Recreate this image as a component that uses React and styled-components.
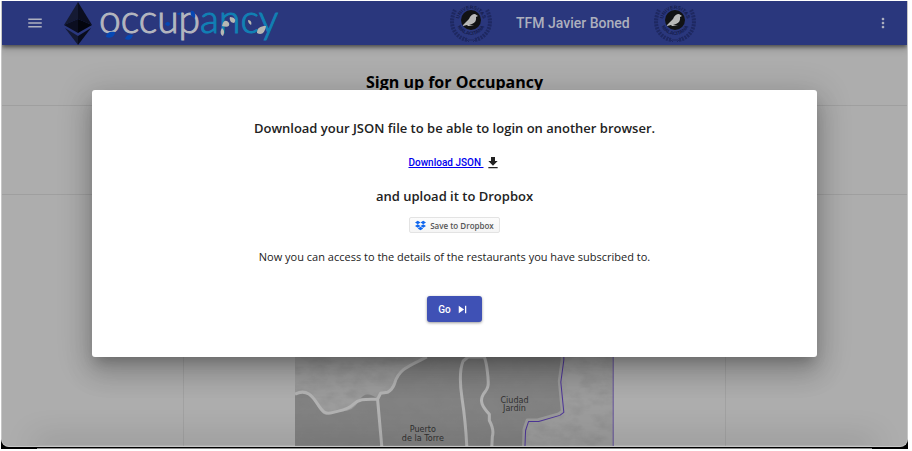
import React from "react";
import styled, { createGlobalStyle } from "styled-components";
import { MdMenu, MdMoreVert, MdFileDownload, MdSkipNext } from "react-icons/md";
import { FaDropbox } from "react-icons/fa";

const GlobalStyle = createGlobalStyle`
  * { box-sizing: border-box; }
  html, body, #root { height: 100%; }
  body {
    margin: 0;
    background: #fff;
    font-family: "Open Sans", "Noto Sans", sans-serif;
    color: #000;
  }
  h1, h2, p { margin: 0; }
`;

const Desktop = styled.div`
  height: 100vh;
  padding: 1px 4px 2px 1px;
`;

const Screen = styled.div`
  height: 100%;
  display: flex;
  flex-direction: column;
  background: #000;
`;

const Window = styled.div`
  position: relative;
  flex: 1;
  min-height: 0;
  display: flex;
  flex-direction: column;
  overflow: hidden;
  border: solid #c6c6c6;
  border-width: 0 1px 1px;
  border-radius: 0 0 8px 8px;
  background: #adadad;
`;

const NextWindowEdge = styled.div`
  height: 1px;
  margin: 1px 36px 0;
  background: #8c8c8c;
`;

const AppBar = styled.header`
  position: relative;
  flex: none;
  display: grid;
  grid-template-columns: 1fr auto 1fr;
  align-items: center;
  height: 44px;
  padding: 0 16px 0 24px;
  background: #2a377d;
  box-shadow: 0 2px 4px rgba(0, 0, 0, 0.5), 0 4px 8px rgba(0, 0, 0, 0.15);
`;

const BarGroup = styled.div`
  display: flex;
  align-items: center;
  gap: 20px;
  justify-content: ${(p) => (p.$end ? "flex-end" : "flex-start")};
`;

const IconButton = styled.button`
  display: flex;
  padding: 0;
  border: 0;
  background: none;
  color: #aeb1c0;
  font-size: ${(p) => p.$size}px;
`;

const Brand = styled.a`
  display: flex;
  align-items: center;
  gap: 8px;

  svg { overflow: visible; }
`;

const BarCenter = styled.div`
  display: flex;
  align-items: center;
  gap: 24px;
  padding-left: 172px;
`;

const BarTitle = styled.h1`
  font: 500 14px Roboto, sans-serif;
  color: #adb0bd;
  white-space: nowrap;
`;

const Section = styled.section`
  flex: none;
  display: flex;
  justify-content: center;
  height: ${(p) => p.$height}px;
  padding-top: 24px;
  border-bottom: 1px solid #9f9f9f;
`;

const PageTitle = styled.h2`
  font-size: 16px;
  line-height: 26px;
  font-weight: 700;
`;

const Card = styled.main`
  flex: 1;
  min-height: 0;
  width: 60%;
  margin: 0 auto;
  padding-top: 19px;
  display: flex;
  justify-content: center;
  align-items: flex-start;
  overflow: hidden;
  border: solid #a1a1a1;
  border-width: 0 1px;
`;

const MapSvg = styled.svg`
  width: 59%;
  height: auto;
  flex: none;
`;

const BottomShade = styled.div`
  position: absolute;
  inset: auto 0 0 0;
  height: 1px;
  margin: 0 36px;
  box-shadow: 0 0 30px 4px rgba(0, 0, 0, 0.25);
`;

const Overlay = styled.div`
  position: absolute;
  inset: 0 -1px;
  display: flex;
  align-items: center;
  justify-content: center;
`;

const Dialog = styled.section`
  width: 80%;
  display: flex;
  flex-direction: column;
  align-items: center;
  padding: 28px 24px 35px;
  border-radius: 3px;
  background: #fff;
  color: #222;
  text-align: center;
  box-shadow: 0 8px 12px -4px rgba(0, 0, 0, 0.2), 0 16px 26px 2px rgba(0, 0, 0, 0.14),
    0 6px 32px 6px rgba(0, 0, 0, 0.14);
`;

const DialogHeading = styled.h2`
  font-size: 13px;
  line-height: 20px;
  font-weight: 600;
`;

const DialogText = styled.p`
  margin-top: 14px;
  font-size: 11px;
  line-height: 20px;
`;

const DownloadLink = styled.a`
  display: flex;
  align-items: center;
  gap: 1px;
  margin: 17px 0 15px;
  color: #0000ee;
  font: 500 10px/16px Roboto, sans-serif;
  text-decoration: none;

  span { text-decoration: underline; white-space: pre; }
  svg { color: #222; font-size: 16px; }
`;

const DropboxButton = styled.button`
  display: flex;
  align-items: center;
  gap: 4px;
  height: 16px;
  margin-top: 11px;
  padding: 0 5px;
  border: 1px solid #e3e3e3;
  border-radius: 2px;
  background: linear-gradient(#fcfcfc, #f5f5f5);
  color: #555;
  font: 600 8px "Open Sans", sans-serif;

  svg { color: #0f66ef; font-size: 11px; }
`;

const GoButton = styled.button`
  display: flex;
  align-items: center;
  gap: 4px;
  height: 26px;
  margin-top: 29px;
  padding: 0 12px 0 11px;
  border: 0;
  border-radius: 3px;
  background: #3f51b5;
  color: #fff;
  font: 500 10px Roboto, sans-serif;
  box-shadow: 0 1px 3px rgba(0, 0, 0, 0.4);

  svg { font-size: 15px; }
`;

const EthereumIcon = () => (
  <svg width="28" height="43" viewBox="0 0 28 43" aria-hidden="true">
    <path d="M14 0 0 23 14 17Z" fill="#151a33" />
    <path d="M14 0v17l14 6Z" fill="#0b0e1f" />
    <path d="M0 23 14 17V31Z" fill="#0b0e20" />
    <path d="M28 23 14 17V31Z" fill="#03050d" />
    <path d="M1 26 14 34V43Z" fill="#141a35" />
    <path d="M27 26 14 34V43Z" fill="#090c1c" />
  </svg>
);

const Wordmark = () => (
  <svg width="178" height="42" viewBox="0 0 178 42" role="img" aria-label="occupancy">
    <g fontFamily="Lato, sans-serif" fontWeight="300" fontSize="39" strokeWidth="1">
      <text x="-1" y="31" fill="#b4b6bf" stroke="#b4b6bf">
        occup<tspan fill="#1180b4" stroke="#1180b4">ancy</tspan>
      </text>
    </g>
    <g fill="#0648b4">
      <path d="M6 35c0-4 4-6 9-5 0 4-4 7-9 5Z" />
      <path d="M25 37c1-4 4-5 8-4-1 4-4 6-8 4Z" />
      <path d="M65 22c2-3 5-2 5 0s-3 3-5 0Z" />
      <path d="M91 9c3-1 5 3 4 7-4-1-5-4-4-7Z" />
      <path d="M76 12l5-2-1 3Z" />
    </g>
    <g fill="#b7b7b3">
      <path d="M122 24c1-5 4-7 7-3 1 3-1 5-7 3Z" />
      <path d="M122 26c2 2 3 4 1 8-3-1-3-5-1-8Z" />
      <path d="M130 15c4 0 7 3 4 6-3 0-5-3-4-6Z" />
      <path d="M148 18c3 0 4 3 3 5-2-1-3-3-3-5Z" />
      <path d="M157 31c0-5 3-7 9-7-1 6-4 10-9 7Z" />
    </g>
  </svg>
);

const Seal = ({ id }) => (
  <svg width="42" height="40" viewBox="0 0 42 40" role="img" aria-label="Universitas Malacitana">
    <defs>
      <path id={`${id}-top`} d="M9 18a12 12 0 0 1 24 0" />
      <path id={`${id}-low`} d="M6 17a15 15 0 0 0 30 0" />
    </defs>
    <g fill="none" stroke="#1e2861">
      <path
        d="M17 37C4 34-2 21 5 7M25 37C38 34 44 21 37 7"
        strokeWidth="4"
        strokeDasharray="2 1"
      />
      <path d="M14 34l5 5M28 34l-5 5M18 37h6" strokeWidth="1" />
    </g>
    <g
      fill="#151d4c"
      fontFamily="Liberation Sans, sans-serif"
      fontWeight="700"
      fontSize="5"
    >
      <text textAnchor="middle">
        <textPath href={`#${id}-top`} startOffset="50%">UNIVERSITAS</textPath>
      </text>
      <text textAnchor="middle">
        <textPath href={`#${id}-low`} startOffset="50%">MALACITANA</textPath>
      </text>
    </g>
    <circle cx="21" cy="17" r="10" fill="#111214" />
    <path d="M13 22 19 16Q21 11 25 11l3 2-2 1q1 5-4 7l-3 1 5 1h-6l-1-1-4 1Z" fill="#b9b9b9" />
  </svg>
);

const BOUNDARY = "M266 0V144L263 166 266 196 262 199 241 205 231 205 228 214 227 240";

const DistrictMap = () => (
  <MapSvg viewBox="0 0 317 240" role="img" aria-label="Map of Málaga districts">
    <defs>
      <filter id="terrain" x="0" y="0" width="100%" height="100%">
        <feTurbulence type="fractalNoise" baseFrequency="0.06 0.1" numOctaves="4" seed="3" />
        <feColorMatrix
          type="matrix"
          values="0 0 0 0 0.2  0 0 0 0 0.2  0 0 0 0 0.2  2 0 0 0 -0.7"
        />
      </filter>
    </defs>
    <rect width="317" height="240" fill="#9c9c9c" />
    <path
      d="M0 179Q12 172 20 187T32 199 47 196 64 185 83 184L85 178 92 177 97 171 104 159 116 149 131 143V0H266V144L263 166 266 196 241 205 231 205 227 240H0Z"
      fill="#828282"
    />
    <rect width="317" height="240" filter="url(#terrain)" opacity="0.3" />
    <g fill="none" stroke="#b2b2b2" strokeWidth="3" strokeLinejoin="round">
      <path d="M0 179C13 172 19 184 24 191S31 199 38 197 52 195 58 189 70 184 83 184" />
      <path d="M87 240Q84 207 82 184L85 178 92 177Q97 174 99 168C103 154 113 151 131 142" />
      <path d="M171 240Q170 210 166 184T167 146L172 142H188Q190 147 191 156C193 171 192 173 187 179 183 186 186 191 193 199L193 205Q198 214 196 221L195 240" />
    </g>
    <path d={BOUNDARY} fill="none" stroke="#999" strokeWidth="4" strokeLinejoin="round" />
    <path
      d={BOUNDARY}
      fill="none"
      stroke="#4d3597"
      strokeWidth="1"
      transform="translate(1 1)"
      strokeLinejoin="round"
    />
    <path d="M316 0V240" stroke="#6957a0" strokeWidth="1" />
    <g fontFamily="DejaVu Sans, sans-serif" fontSize="8" fill="#303030" textAnchor="middle">
      <text x="218" y="188">Ciudad</text>
      <text x="218" y="196">Jardín</text>
      <text x="127" y="217">Puerto</text>
      <text x="127" y="225">de la Torre</text>
    </g>
  </MapSvg>
);

export default function App() {
  return (
    <Desktop>
      <GlobalStyle />
      <Screen>
        <Window>
          <AppBar>
            <BarGroup>
              <IconButton type="button" $size={18} aria-label="Menu">
                <MdMenu />
              </IconButton>
              <Brand href="#home">
                <EthereumIcon />
                <Wordmark />
              </Brand>
            </BarGroup>
            <BarCenter>
              <Seal id="seal-left" />
              <BarTitle>TFM Javier Boned</BarTitle>
              <Seal id="seal-right" />
            </BarCenter>
            <BarGroup $end>
              <IconButton type="button" $size={16} aria-label="More options">
                <MdMoreVert />
              </IconButton>
            </BarGroup>
          </AppBar>
          <Section $height={61}>
            <PageTitle>Sign up for Occupancy</PageTitle>
          </Section>
          <Section $height={89} />
          <Card>
            <DistrictMap />
          </Card>
          <BottomShade />
          <Overlay>
            <Dialog role="dialog" aria-modal="true" aria-labelledby="dialog-heading">
              <DialogHeading id="dialog-heading">
                Download your JSON file to be able to login on another browser.
              </DialogHeading>
              <DownloadLink href="#download">
                <span>{"Download JSON "}</span>
                <MdFileDownload />
              </DownloadLink>
              <DialogHeading>and upload it to Dropbox</DialogHeading>
              <DropboxButton type="button">
                <FaDropbox />
                Save to Dropbox
              </DropboxButton>
              <DialogText>
                Now you can access to the details of the restaurants you have subscribed to.
              </DialogText>
              <GoButton type="button">
                Go
                <MdSkipNext />
              </GoButton>
            </Dialog>
          </Overlay>
        </Window>
        <NextWindowEdge />
      </Screen>
    </Desktop>
  );
}
